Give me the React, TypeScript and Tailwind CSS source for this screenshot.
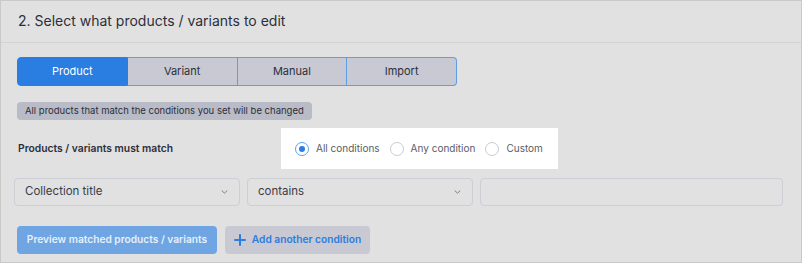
import React from "react";

const font = { fontFamily: "Inter, 'Noto Sans', sans-serif" };

function Radio({ checked, label }: { checked?: boolean; label: string }) {
  return (
    <div className="flex items-center gap-[7px] shrink-0 whitespace-nowrap">
      <span
        className={
          "w-[14px] h-[14px] rounded-full border flex items-center justify-center bg-white shrink-0 " +
          (checked ? "border-[#5b9ff0]" : "border-[#c9cbd3]")
        }
      >
        {checked && <span className="w-[6px] h-[6px] rounded-full bg-[#2b7de0]" />}
      </span>
      <span className="text-[10px] text-[#5a5c66]">{label}</span>
    </div>
  );
}

function Chevron() {
  return (
    <svg width="7" height="4" viewBox="0 0 7 4" fill="none">
      <path d="M1 0.8l2.5 2.4 2.5-2.4" stroke="#7a7c87" strokeWidth="1" strokeLinecap="round" strokeLinejoin="round" />
    </svg>
  );
}

export default function App() {
  const tabs = ["Product", "Variant", "Manual", "Import"];
  return (
    <div style={font} className="w-[802px] h-[263px] bg-[#e1e1e1] border border-[#c9c9c9] flex flex-col">
      <div className="h-[42px] border-b border-[#d3d3d3] flex items-center pl-[17px] pb-[2px]">
        <span className="text-[14px] text-[#2d2f3a]">2. Select what products / variants to edit</span>
      </div>
      <div className="flex flex-col pl-[16px] pr-[18px]">
        <div className="mt-[14px] flex w-[440px] h-[29px]">
          {tabs.map((t, i) => (
            <div
              key={t}
              className={
                "flex-1 flex items-center justify-center text-[11px] border whitespace-nowrap " +
                (i === 0
                  ? "bg-[#2a7de1] border-[#2a7de1] text-white rounded-l-[4px]"
                  : "bg-[#c8c9d2] border-[#5e9ee6] text-[#2d2f3a] border-l-0 ") +
                (i === 3 ? "rounded-r-[4px]" : "")
              }
            >
              {t}
            </div>
          ))}
        </div>
        <div className="mt-[16px] self-start h-[18px] px-[8px] bg-[#b9bbc6] rounded-[4px] flex items-center text-[9.5px] text-[#2d2f3a] whitespace-nowrap">
          All products that match the conditions you set will be changed
        </div>
        <div className="mt-[8px] flex items-center h-[41px]">
          <span className="w-[264px] shrink-0 pl-[1px] text-[10.3px] font-semibold text-[#2d2f3a] whitespace-nowrap">
            Products / variants must match
          </span>
          <div className="h-[41px] w-[277px] shrink-0 bg-white flex items-center pl-[14px] gap-[10px]">
            <Radio checked label="All conditions" />
            <Radio label="Any condition" />
            <Radio label="Custom" />
          </div>
        </div>
        <div className="mt-[9px] -ml-[3px] flex gap-[7px] h-[28px]">
          <div className="w-[226px] shrink-0 border border-[#cdced6] rounded-[4px] flex items-center justify-between pl-[10px] pr-[11px] text-[11.5px] text-[#3a3c47]">
            <span>Collection title</span>
            <Chevron />
          </div>
          <div className="w-[226px] shrink-0 border border-[#cdced6] rounded-[4px] flex items-center justify-between pl-[10px] pr-[11px] text-[11.5px] text-[#3a3c47]">
            <span>contains</span>
            <Chevron />
          </div>
          <div className="w-[303px] shrink-0 border border-[#cdced6] rounded-[4px]" />
        </div>
        <div className="mt-[20px] flex gap-[8px] h-[28px]">
          <div className="w-[200px] shrink-0 bg-[#6ea5e2] rounded-[4px] flex items-center justify-center text-[10.2px] font-semibold text-[#e6effa] whitespace-nowrap">
            Preview matched products / variants
          </div>
          <div className="w-[145px] shrink-0 bg-[#c8c9d2] rounded-[4px] flex items-center justify-center gap-[6px] text-[10.2px] font-semibold text-[#2b7de0] whitespace-nowrap">
            <svg width="12" height="12" viewBox="0 0 12 12" className="shrink-0">
              <path d="M6 1v10M1 6h10" stroke="#2b7de0" strokeWidth="2" strokeLinecap="round" />
            </svg>
            <span>Add another condition</span>
          </div>
        </div>
      </div>
    </div>
  );
}
